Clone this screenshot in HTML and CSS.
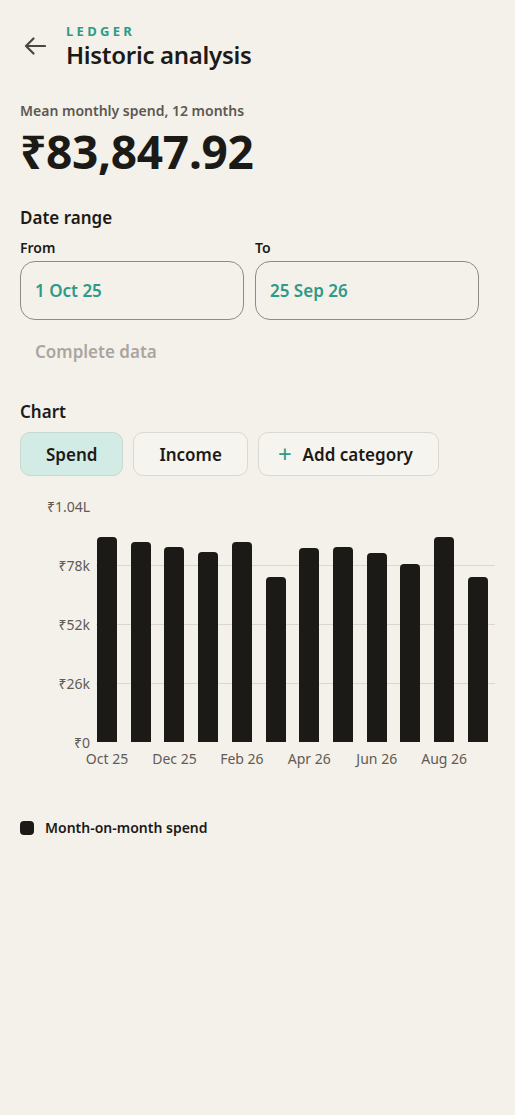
FILE: index.html
```html
<!DOCTYPE html>
<html lang="en">
<head>
<meta charset="utf-8">
<title>Historic analysis</title>
<link rel="stylesheet" href="styles.css">
</head>
<body>
<header class="header">
  <button class="back" aria-label="Back">
    <svg width="22" height="18" viewBox="0 0 22 18" fill="none" stroke="#4a4743" stroke-width="2.2" stroke-linecap="round" stroke-linejoin="round"><path d="M21 9H2M9.5 1.5L2 9l7.5 7.5"/></svg>
  </button>
  <div class="titles">
    <div class="eyebrow">LEDGER</div>
    <h1 class="title">Historic analysis</h1>
  </div>
</header>

<section class="summary">
  <div class="summary-label">Mean monthly spend, 12 months</div>
  <div class="summary-value">₹83,847.92</div>
</section>

<section class="range">
  <h2 class="section-title">Date range</h2>
  <div class="range-fields">
    <div class="field">
      <div class="field-label">From</div>
      <div class="field-box">1 Oct 25</div>
    </div>
    <div class="field">
      <div class="field-label">To</div>
      <div class="field-box">25 Sep 26</div>
    </div>
  </div>
  <div class="complete">Complete data</div>
</section>

<section class="chart-section">
  <h2 class="section-title">Chart</h2>
  <div class="chips">
    <button class="chip chip-active">Spend</button>
    <button class="chip">Income</button>
    <button class="chip chip-add"><span class="plus">+</span>Add category</button>
  </div>

  <div class="chart">
    <div class="y-axis">
      <span class="tick">₹1.04L</span>
      <span class="tick">₹78k</span>
      <span class="tick">₹52k</span>
      <span class="tick">₹26k</span>
      <span class="tick">₹0</span>
    </div>
    <div class="plot">
      <div class="bar" style="height:86.9%"></div>
      <div class="bar" style="height:84.7%"></div>
      <div class="bar" style="height:82.6%"></div>
      <div class="bar" style="height:80.5%"></div>
      <div class="bar" style="height:84.7%"></div>
      <div class="bar" style="height:69.9%"></div>
      <div class="bar" style="height:82.2%"></div>
      <div class="bar" style="height:82.6%"></div>
      <div class="bar" style="height:80.1%"></div>
      <div class="bar" style="height:75.4%"></div>
      <div class="bar" style="height:86.9%"></div>
      <div class="bar" style="height:69.9%"></div>
    </div>
    <div class="x-axis">
      <span class="xl">Oct 25</span><span class="xl"></span>
      <span class="xl">Dec 25</span><span class="xl"></span>
      <span class="xl">Feb 26</span><span class="xl"></span>
      <span class="xl">Apr 26</span><span class="xl"></span>
      <span class="xl">Jun 26</span><span class="xl"></span>
      <span class="xl">Aug 26</span><span class="xl"></span>
    </div>
  </div>

  <div class="legend">
    <span class="swatch"></span>
    <span class="legend-text">Month-on-month spend</span>
  </div>
</section>
</body>
</html>
```

FILE: styles.css
```css
* { box-sizing: border-box; }

html, body {
  margin: 0;
  background: #f4f1ea;
}

body {
  padding: 0 20px;
  font-family: "Noto Sans", "DejaVu Sans", sans-serif;
  color: #1c1a17;
  min-height: 1115px;
}

h1, h2 { margin: 0; }

button {
  font-family: inherit;
  background: none;
  border: none;
  padding: 0;
  color: inherit;
  cursor: pointer;
}

/* header */
.header {
  display: flex;
  align-items: center;
  padding-top: 22px;
}

.back {
  width: 22px;
  height: 18px;
  margin-left: 4px;
  display: flex;
}

.titles {
  margin-left: 20px;
  display: flex;
  flex-direction: column;
}

.eyebrow {
  font-size: 13px;
  font-weight: 700;
  letter-spacing: 3.3px;
  color: #2e9a87;
  line-height: 18px;
}

.title {
  font-size: 24px;
  font-weight: 600;
  line-height: 30px;
  letter-spacing: -0.3px;
}

/* summary */
.summary {
  margin-top: 31px;
}

.summary-label {
  font-size: 14px;
  font-weight: 600;
  color: #5c5853;
  line-height: 20px;
}

.summary-value {
  font-size: 46px;
  font-weight: 700;
  line-height: 60px;
  letter-spacing: -0.3px;
}

/* date range */
.range {
  margin-top: 25px;
}

.section-title {
  font-size: 17px;
  font-weight: 600;
  line-height: 24px;
}

.range-fields {
  display: flex;
  gap: 11px;
  margin-top: 8px;
  width: 459px;
}

.field {
  flex: 1;
}

.field-label {
  font-size: 14px;
  font-weight: 600;
  line-height: 20px;
}

.field-box {
  margin-top: 3px;
  height: 59px;
  border: 1.3px solid #8e8a84;
  border-radius: 15px;
  display: flex;
  align-items: center;
  padding-left: 14px;
  font-size: 17px;
  font-weight: 600;
  color: #2e9a87;
}

.complete {
  margin-top: 20px;
  padding-left: 15px;
  font-size: 17px;
  font-weight: 600;
  color: #aaa69f;
  line-height: 24px;
}

/* chart */
.chart-section {
  margin-top: 36px;
}

.chips {
  display: flex;
  gap: 10px;
  margin-top: 8px;
}

.chip {
  height: 44px;
  padding: 0 25px;
  border: 1.3px solid #dcd8cf;
  border-radius: 10px;
  background: #f6f4ee;
  font-size: 17px;
  font-weight: 600;
  color: #1c1a17;
  display: flex;
  align-items: center;
}

.chip-active {
  background: #d3ebe5;
  border-color: #c5d9d2;
}

.chip-add {
  padding-left: 19px;
}

.plus {
  color: #2e9a87;
  font-size: 24px;
  font-weight: 400;
  margin-right: 11px;
  line-height: 1;
}

.chart {
  display: grid;
  grid-template-columns: 76px 399px;
  grid-template-rows: 236px auto;
  margin-top: 30px;
  margin-left: -20px;
  padding-left: 20px;
}

.y-axis {
  grid-column: 1;
  grid-row: 1;
  display: flex;
  flex-direction: column;
  justify-content: space-between;
  align-items: flex-end;
  padding-right: 6px;
}

.tick {
  height: 0;
  display: flex;
  align-items: center;
  font-size: 14px;
  color: #5f5b55;
  white-space: nowrap;
}

.plot {
  grid-column: 2;
  grid-row: 1;
  display: flex;
  align-items: flex-end;
  justify-content: space-between;
  padding: 0 7px 0 1px;
  background-image:
    linear-gradient(#dbd7ce, #dbd7ce),
    linear-gradient(#dbd7ce, #dbd7ce),
    linear-gradient(#dbd7ce, #dbd7ce);
  background-size: 100% 1px;
  background-repeat: no-repeat;
  background-position: 0 59px, 0 118px, 0 177px;
}

.bar {
  width: 20px;
  background: #1c1a17;
  border-radius: 4px 4px 0 0;
}

.x-axis {
  grid-column: 2;
  grid-row: 2;
  display: flex;
  justify-content: space-between;
  padding: 0 7px 0 1px;
}

.xl {
  width: 20px;
  display: flex;
  justify-content: center;
  white-space: nowrap;
  font-size: 14px;
  color: #5f5b55;
  line-height: 20px;
  margin-top: 7px;
}

.legend {
  display: flex;
  align-items: center;
  gap: 11px;
  margin-top: 49px;
}

.swatch {
  width: 14px;
  height: 14px;
  border-radius: 4px;
  background: #1c1a17;
}

.legend-text {
  font-size: 14px;
  font-weight: 600;
  line-height: 20px;
}
```
